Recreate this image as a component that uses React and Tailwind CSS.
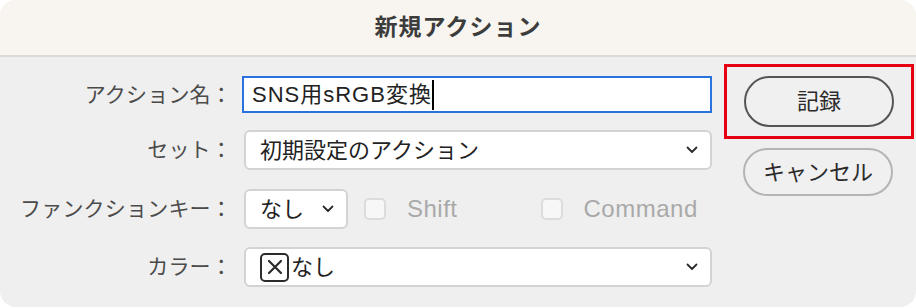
const Chevron = () => (
  <svg width="12" height="8" viewBox="0 0 12 8" className="shrink-0">
    <path d="M1.5 1.5 L6 6 L10.5 1.5" fill="none" stroke="#2b2b2b" strokeWidth="1.8" strokeLinecap="round" strokeLinejoin="round" />
  </svg>
);

const Label = ({ children }) => (
  <div className="w-[232px] shrink-0 text-right text-[21px] text-[#4b4b4b] tracking-[0.2px]">
    {children}
  </div>
);

const Select = ({ children, className }) => (
  <div className={`flex h-10 items-center justify-between rounded-md border-2 border-[#d3d3d3] bg-white pl-[12px] pr-[12px] text-[22px] text-[#222] ${className}`}>
    <div className="flex items-center">{children}</div>
    <Chevron />
  </div>
);

const Check = ({ label, className }) => (
  <div className={`flex items-center ${className}`}>
    <div className="h-[22px] w-[22px] rounded-[5px] border-2 border-[#dcdcdc] bg-[#f7f7f7]" />
    <span className="ml-[21px] text-[24px] tracking-[0.5px] text-[#a9a9a9]">{label}</span>
  </div>
);

export default function App() {
  return (
    <div className="h-[308px] w-[916px] bg-white font-['Liberation_Sans','Noto_Sans_CJK_JP',sans-serif]">
      <div className="flex h-[307px] flex-col overflow-hidden rounded-[16px] bg-[#efefef]">
        <div className="flex h-[57px] shrink-0 items-center justify-center border-b-2 border-[#dcd9d5] bg-[#f8f5f0]">
          <span className="text-[23px] font-bold tracking-[1px] text-[#3c3c3c]">新規アクション</span>
        </div>

        <div className="flex">
          <div className="flex w-[712px] flex-col pt-[19px]">
            <div className="flex items-center">
              <Label>アクション名：</Label>
              <div className="ml-[10px] flex h-[37px] flex-1 items-center border-2 border-[#2a72de] bg-white pl-[8px] text-[22px] tracking-[1px] text-[#222]">
                SNS用sRGB変換
                <span className="h-[30px] w-[2px] bg-black" />
              </div>
            </div>

            <div className="mt-[17px] flex items-center">
              <Label>セット：</Label>
              <Select className="ml-[12px] flex-1 pl-[14px]">初期設定のアクション</Select>
            </div>

            <div className="mt-[19px] flex items-center">
              <Label>ファンクションキー：</Label>
              <Select className="ml-[12px] w-[104px] pl-[14px]">なし</Select>
              <Check label="Shift" className="ml-[16px]" />
              <Check label="Command" className="ml-[83px]" />
            </div>

            <div className="mt-[18px] flex items-center">
              <Label>カラー：</Label>
              <Select className="ml-[12px] flex-1 pl-[14px]">
                <div className="flex h-[29px] w-[29px] items-center justify-center rounded-[5px] border-2 border-[#2b2b2b]">
                  <svg width="16" height="16" viewBox="0 0 16 16">
                    <path d="M2 2 L14 14 M14 2 L2 14" stroke="#2b2b2b" strokeWidth="2.2" strokeLinecap="round" />
                  </svg>
                </div>
                <span className="ml-[2px]">なし</span>
              </Select>
            </div>
          </div>

          <div className="ml-[12px] flex w-[190px] flex-col pt-[7px]">
            <div className="flex h-[75px] items-center justify-center border-[3px] border-[#e60012]">
              <div className="flex h-[51px] w-[150px] items-center justify-center rounded-full border-2 border-[#555] bg-[#f0f0f0] text-[22px] text-[#2b2b2b]">
                記録
              </div>
            </div>
            <div className="mt-[9px] ml-[19px] flex h-[48px] w-[150px] items-center justify-center rounded-full border-2 border-[#b4b4b4] bg-[#f0f0f0] text-[22px] text-[#2b2b2b]">
              キャンセル
            </div>
          </div>
        </div>
      </div>
    </div>
  );
}
